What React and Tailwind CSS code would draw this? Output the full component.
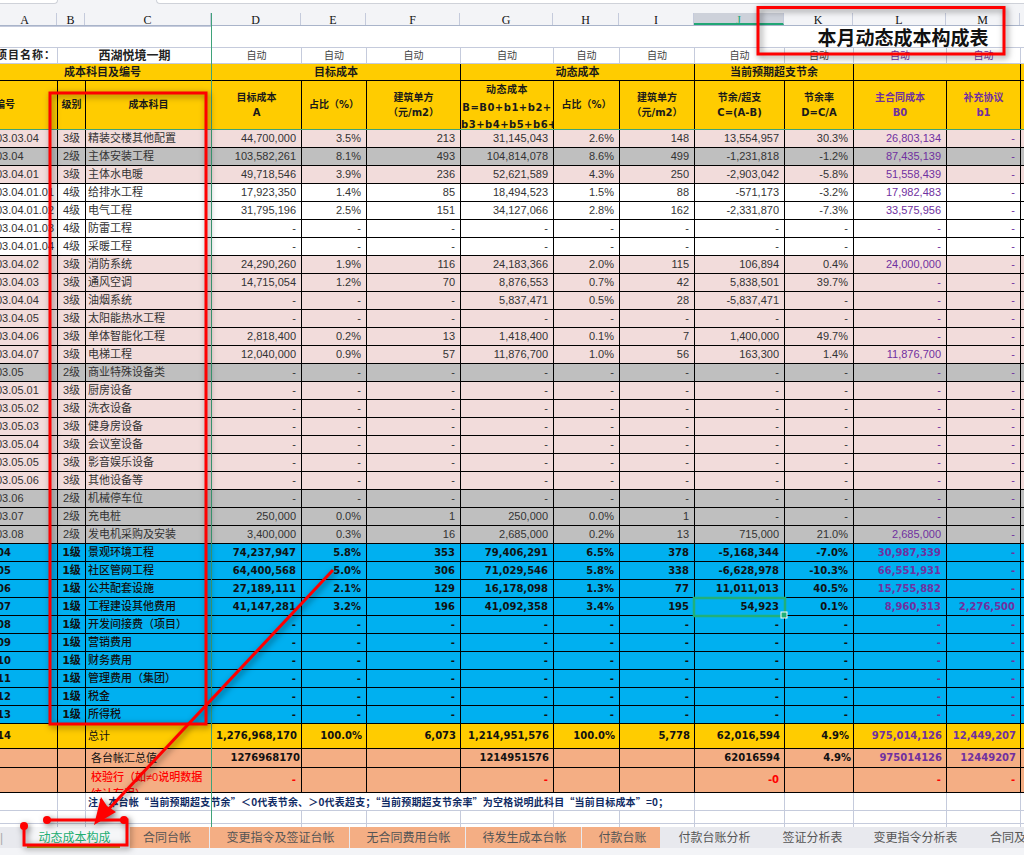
const PINK = 'bg-[#f2dcdb]';
const GRAY = 'bg-[#bfbfbf]';
const WHITE = 'bg-white';
const BLUE = 'bg-[#00b0f0]';

const D = ['-', '-', '-', '-', '-', '-', '-', '-', '-', '-'];

// code, level, name, colour, values D..M
const rows = [
  ['03.03.04', 3, '精装交楼其他配置', PINK, ['44,700,000', '3.5%', '213', '31,145,043', '2.6%', '148', '13,554,957', '30.3%', '26,803,134', '-']],
  ['03.04', 2, '主体安装工程', GRAY, ['103,582,261', '8.1%', '493', '104,814,078', '8.6%', '499', '-1,231,818', '-1.2%', '87,435,139', '-']],
  ['03.04.01', 3, '主体水电暖', PINK, ['49,718,546', '3.9%', '236', '52,621,589', '4.3%', '250', '-2,903,042', '-5.8%', '51,558,439', '-']],
  ['03.04.01.01', 4, '给排水工程', WHITE, ['17,923,350', '1.4%', '85', '18,494,523', '1.5%', '88', '-571,173', '-3.2%', '17,982,483', '-']],
  ['03.04.01.02', 4, '电气工程', WHITE, ['31,795,196', '2.5%', '151', '34,127,066', '2.8%', '162', '-2,331,870', '-7.3%', '33,575,956', '-']],
  ['03.04.01.03', 4, '防雷工程', WHITE, D],
  ['03.04.01.04', 4, '采暖工程', WHITE, D],
  ['03.04.02', 3, '消防系统', PINK, ['24,290,260', '1.9%', '116', '24,183,366', '2.0%', '115', '106,894', '0.4%', '24,000,000', '-']],
  ['03.04.03', 3, '通风空调', PINK, ['14,715,054', '1.2%', '70', '8,876,553', '0.7%', '42', '5,838,501', '39.7%', '-', '-']],
  ['03.04.04', 3, '油烟系统', PINK, ['-', '-', '-', '5,837,471', '0.5%', '28', '-5,837,471', '-', '-', '-']],
  ['03.04.05', 3, '太阳能热水工程', PINK, D],
  ['03.04.06', 3, '单体智能化工程', PINK, ['2,818,400', '0.2%', '13', '1,418,400', '0.1%', '7', '1,400,000', '49.7%', '-', '-']],
  ['03.04.07', 3, '电梯工程', PINK, ['12,040,000', '0.9%', '57', '11,876,700', '1.0%', '56', '163,300', '1.4%', '11,876,700', '-']],
  ['03.05', 2, '商业特殊设备类', GRAY, D],
  ['03.05.01', 3, '厨房设备', PINK, D],
  ['03.05.02', 3, '洗衣设备', PINK, D],
  ['03.05.03', 3, '健身房设备', PINK, D],
  ['03.05.04', 3, '会议室设备', PINK, D],
  ['03.05.05', 3, '影音娱乐设备', PINK, D],
  ['03.05.06', 3, '其他设备等', PINK, D],
  ['03.06', 2, '机械停车位', GRAY, D],
  ['03.07', 2, '充电桩', GRAY, ['250,000', '0.0%', '1', '250,000', '0.0%', '1', '-', '-', '-', '-']],
  ['03.08', 2, '发电机采购及安装', GRAY, ['3,400,000', '0.3%', '16', '2,685,000', '0.2%', '13', '715,000', '21.0%', '2,685,000', '-']],
  ['04', 1, '景观环境工程', BLUE, ['74,237,947', '5.8%', '353', '79,406,291', '6.5%', '378', '-5,168,344', '-7.0%', '30,987,339', '-']],
  ['05', 1, '社区管网工程', BLUE, ['64,400,568', '5.0%', '306', '71,029,546', '5.8%', '338', '-6,628,978', '-10.3%', '66,551,931', '-']],
  ['06', 1, '公共配套设施', BLUE, ['27,189,111', '2.1%', '129', '16,178,098', '1.3%', '77', '11,011,013', '40.5%', '15,755,882', '-']],
  ['07', 1, '工程建设其他费用', BLUE, ['41,147,281', '3.2%', '196', '41,092,358', '3.4%', '195', '54,923', '0.1%', '8,960,313', '2,276,500']],
  ['08', 1, '开发间接费（项目）', BLUE, D],
  ['09', 1, '营销费用', BLUE, D],
  ['10', 1, '财务费用', BLUE, D],
  ['11', 1, '管理费用（集团）', BLUE, D],
  ['12', 1, '税金', BLUE, D],
  ['13', 1, '所得税', BLUE, D],
];

const widths = [64, 28, 126, 90, 65, 94, 93, 66, 75, 90, 69, 93, 74, 20];
const letters = ['A', 'B', 'C', 'D', 'E', 'F', 'G', 'H', 'I', 'J', 'K', 'L', 'M', ''];

const regular = "font-['Liberation_Sans','Noto_Sans_CJK_SC',sans-serif]";
const bold = "font-['DejaVu_Sans','Noto_Sans_CJK_SC',sans-serif] font-bold";
const cell = 'border border-black p-0 overflow-hidden whitespace-nowrap';
const light = 'border border-[#c5cbdc] p-0 overflow-hidden whitespace-nowrap';

function ProjectRow() {
  const autos = ['D', 'E', 'F', 'G', 'H', 'I', 'J', 'K', 'L', 'M'];
  return (
    <tr className="h-[16px]">
      <td className={`${light} pl-[2px] text-[11px] font-bold tracking-[1px] text-[#222]`}>项目名称：</td>
      <td colSpan={2} className={`${light} text-center text-[12px] font-bold text-[#222]`}>西湖悦境一期</td>
      {autos.map((c) => (
        <td key={c} className={`${light} text-center text-[10px] ${c === 'L' || c === 'M' ? 'text-[#7030a0]' : 'text-[#444]'}`}>自动</td>
      ))}
      <td className={light}></td>
    </tr>
  );
}

function HeaderRows() {
  const h = `${cell} bg-[#ffcc00] text-center text-[11px] ${bold} text-[#1a1a1a]`;
  const h2 = `${cell} bg-[#ffcc00] text-center text-[10px] ${bold} text-[#1a1a1a]`;
  const purple = `${cell} bg-[#ffcc00] text-center text-[10px] ${bold} text-[#7030a0]`;
  return (
    <>
      <tr className="h-[17px]">
        <td colSpan={3} className={h}>成本科目及编号</td>
        <td colSpan={3} className={h}>目标成本</td>
        <td colSpan={3} className={h}>动态成本</td>
        <td colSpan={2} className={h}>当前预期超支节余</td>
        <td colSpan={2} className={h}></td>
        <td className={h}></td>
      </tr>
      <tr className="h-[49px]">
        <td className={`${h2} pl-[1px] !text-left`}>编号</td>
        <td className={h2}>级别</td>
        <td className={h2}>成本科目</td>
        <td className={`${h2} leading-[15px]`}>目标成本<br />A</td>
        <td className={h2}>占比（%）</td>
        <td className={`${h2} leading-[15px]`}>建筑单方<br />（元/m2）</td>
        <td className={`${h2} leading-[17.5px] tracking-[0.5px]`}>
          <div className="h-[48px] overflow-hidden">动态成本<br />B=B0+b1+b2+<br />b3+b4+b5+b6+</div>
        </td>
        <td className={h2}>占比（%）</td>
        <td className={`${h2} leading-[15px]`}>建筑单方<br />（元/m2）</td>
        <td className={`${h2} leading-[15px]`}>节余/超支<br />C=(A-B)</td>
        <td className={`${h2} leading-[15px]`}>节余率<br />D=C/A</td>
        <td className={`${purple} leading-[15px]`}>主合同成本<br />B0</td>
        <td className={`${purple} leading-[15px]`}>补充协议<br />b1</td>
        <td className={h2}></td>
      </tr>
    </>
  );
}

function DataRow({ row }) {
  const [code, level, name, color, values] = row;
  const isBold = level === 1;
  const font = isBold ? bold : regular;
  const size = isBold ? 'text-[10px]' : 'text-[11px]';
  const ink = isBold ? 'text-[#111]' : 'text-[#333]';
  return (
    <tr className={`h-[18px] ${color}`}>
      <td className={`${cell} ${font} ${size} ${ink} ${isBold ? 'pl-[3px]' : 'pl-[2px]'}`}>{code}</td>
      <td className={`${cell} text-center ${font} text-[11px] ${ink}`}>{level}级</td>
      <td className={`${cell} pl-[2px] ${regular} ${isBold ? 'font-medium text-[#111]' : ink} text-[11px]`}>{name}</td>
      {values.map((v, i) => (
        <td key={i} className={`${cell} pr-[5px] text-right ${font} ${size} ${i >= 8 ? 'text-[#7030a0]' : ink}`}>{v}</td>
      ))}
      <td className={cell}></td>
    </tr>
  );
}

function TotalRows() {
  const num = `${cell} pr-[4px] text-right text-[10px] ${bold} text-[#111]`;
  const numP = `${cell} pr-[4px] text-right text-[10px] ${bold} text-[#7030a0]`;
  const red = `${cell} pr-[5px] text-right text-[10px] ${bold} text-[#ff0000]`;
  return (
    <>
      <tr className="h-[25px] bg-[#ffcc00]">
        <td className={`${cell} pl-[3px] text-[10px] ${bold} text-[#111]`}>14</td>
        <td className={cell}></td>
        <td className={`${cell} pl-[2px] text-[11px] ${regular} text-[#111]`}>总计</td>
        <td className={num}>1,276,968,170</td>
        <td className={num}>100.0%</td>
        <td className={num}>6,073</td>
        <td className={num}>1,214,951,576</td>
        <td className={num}>100.0%</td>
        <td className={num}>5,778</td>
        <td className={num}>62,016,594</td>
        <td className={num}>4.9%</td>
        <td className={numP}>975,014,126</td>
        <td className={numP}>12,449,207</td>
        <td className={cell}></td>
      </tr>
      <tr className="h-[19px] bg-[#f4ae84]">
        <td className={cell}></td>
        <td className={cell}></td>
        <td className={`${cell} pl-[5px] text-[11px] ${regular} text-[#111]`}>各台帐汇总值</td>
        <td className={`${num} !pr-[1px]`}>1276968170</td>
        <td className={cell}></td>
        <td className={cell}></td>
        <td className={num}>1214951576</td>
        <td className={cell}></td>
        <td className={cell}></td>
        <td className={num}>62016594</td>
        <td className={`${num} !pr-[2px]`}>4.9%</td>
        <td className={numP}>975014126</td>
        <td className={numP}>12449207</td>
        <td className={cell}></td>
      </tr>
      <tr className="h-[25px] bg-[#f4ae84]">
        <td className={cell}></td>
        <td className={cell}></td>
        <td className={`${cell} text-[11px] ${regular} font-medium text-[#ff0000]`}>
          <div className="h-[24px] overflow-hidden whitespace-normal pl-[5px] pt-[1px] leading-[17px]">校验行（如≠0说明数据统计有误）</div>
        </td>
        <td className={red}>-</td>
        <td className={cell}></td>
        <td className={cell}></td>
        <td className={red}>-</td>
        <td className={cell}></td>
        <td className={cell}></td>
        <td className={red}>-0</td>
        <td className={cell}></td>
        <td className={red}>-</td>
        <td className={red}>-</td>
        <td className={cell}></td>
      </tr>
    </>
  );
}

function NoteRows() {
  return (
    <>
      <tr className="h-[18px] bg-white">
        <td className={`${light} border-t-black`}></td>
        <td className={`${light} border-t-black`}></td>
        <td colSpan={7} className={`${light} border-t-black pl-[2px] font-['Noto_Sans_CJK_SC',sans-serif] text-[10px] font-bold tracking-[0.2px] text-[#0f2a63]`}>
          注：本台帐“当前预期超支节余”＜0代表节余、＞0代表超支；“当前预期超支节余率”为空格说明此科目“当前目标成本”=0；
        </td>
        {[0, 1, 2, 3, 4].map((i) => (
          <td key={i} className={`${light} border-t-black`}></td>
        ))}
      </tr>
      <tr className="h-[13px] bg-white">
        {widths.map((_, i) => (
          <td key={i} className={light}></td>
        ))}
      </tr>
      <tr className="h-[6px] bg-white">
        {widths.map((_, i) => (
          <td key={i} className={light}></td>
        ))}
      </tr>
    </>
  );
}

function SheetTabs() {
  const salmon = [
    ['合同台帐', 'w-[79px] pr-[5px]'],
    ['变更指令及签证台帐', 'w-[139px] pl-[2px]'],
    ['无合同费用台帐', 'w-[115px] pl-[2px]'],
    ['待发生成本台帐', 'w-[115px] pl-[2px]'],
    ['付款台账', 'w-[78px] pl-[3px]'],
  ];
  const plain = [
    ['付款台账分析', 'w-[107px] pl-[2px]'],
    ['签证分析表', 'w-[91px]'],
    ['变更指令分析表', 'w-[115px]'],
    ['合同及变更分析表', 'w-[100px] justify-start pl-[17px]'],
  ];
  return (
    <div className={`flex h-[28px] flex-col bg-[#f3f4f7] ${regular} text-[12px] text-[#555]`}>
      <div className="flex h-[21px] bg-[#e8e9ee]">
        <div className="flex w-[22px] shrink-0 items-center text-[#aaa]">|</div>
        <div className="relative flex w-[107px] shrink-0 items-center justify-center bg-[#f5f6f8] pr-[2px] text-[#22ae72]">
          动态成本构成
          <span className="absolute bottom-0 left-[5px] h-[2px] w-[93px] bg-[#c49a1a]"></span>
        </div>
        <div className="flex gap-[1px] pl-[1px]">
          {salmon.map(([label, w]) => (
            <div key={label} className={`flex shrink-0 items-center justify-center bg-[#f4ae84] ${w}`}>{label}</div>
          ))}
        </div>
        {plain.map(([label, w]) => (
          <div key={label} className={`flex shrink-0 items-center justify-center whitespace-nowrap ${w}`}>{label}</div>
        ))}
      </div>
    </div>
  );
}

// hand-drawn annotations and selection marks that sit on top of the sheet
function Annotations() {
  return (
    <svg className="pointer-events-none absolute left-0 top-0" width="1024" height="855">
      <line x1="211.5" y1="13" x2="211.5" y2="827" stroke="#3fa27a" strokeWidth="1" />
      <line x1="0" y1="129.5" x2="1024" y2="129.5" stroke="#3fa27a" strokeWidth="1" />
      <rect x="694" y="598" width="91" height="18" fill="none" stroke="#21b07a" strokeWidth="2.5" />
      <rect x="781" y="612" width="6" height="6" fill="#21b07a" stroke="#fff" strokeWidth="1" />
      <g style={{ filter: 'drop-shadow(2px 2px 3px rgba(0,0,0,0.5))' }}>
        <rect x="50" y="93" width="156" height="631" fill="none" stroke="#ff0000" strokeWidth="3" />
        <rect x="758" y="7.5" width="246" height="46.5" fill="none" stroke="#ff0000" strokeWidth="3" />
        <polyline points="24,826 24,845 127,845 127,820 47,820" fill="none" stroke="#ff0000" strokeWidth="3" />
        <circle cx="24" cy="826" r="4" fill="#ff0000" />
        <circle cx="47" cy="820" r="4" fill="#ff0000" />
        <circle cx="124" cy="820" r="4" fill="#ff0000" />
        <line x1="333" y1="570" x2="106" y2="812" stroke="#ff0000" strokeWidth="3" />
        <polygon points="94,825 101,797 107,806 116,812" fill="#ff0000" />
      </g>
    </svg>
  );
}

export default function App() {
  return (
    <div className={`relative h-[855px] w-[1024px] overflow-hidden bg-white ${regular}`}>
      {/* 顶部工作簿标签 */}
      <div className="relative h-[13px] bg-[#f3f4f7]">
        <div className="absolute left-0 top-0 h-[4px] w-[58px] rounded-br border-b border-r border-[#cfd2d9] bg-white"></div>
        <div className="absolute right-0 top-0 h-[4px] w-[868px] rounded-bl border-b border-l border-[#cfd2d9] bg-white"></div>
      </div>

      {/* 列标 */}
      <div className="-ml-[7px] flex h-[13px] border-b border-[#a9b4ca] bg-[#f3f4f7] font-['Liberation_Serif',serif] text-[12px] leading-[11px] text-[#111]">
        {letters.map((l, i) => (
          <div
            key={i}
            style={{ width: widths[i] }}
            className={`shrink-0 border-r border-[#c5cbdc] pt-[2px] text-center ${l === 'J' ? 'border-b-2 border-b-[#21a675] bg-[#cdd1da] text-[#21a675]' : ''}`}
          >
            {l}
          </div>
        ))}
      </div>

      <table className="-ml-[7px] w-[1037px] table-fixed border-collapse leading-none">
        <colgroup>
          {widths.map((w, i) => (
            <col key={i} style={{ width: w }} />
          ))}
        </colgroup>
        <tbody>
          <tr className="h-[21px]">
            <td colSpan={3} className={light}></td>
            {[0, 1, 2, 3, 4, 5].map((i) => (
              <td key={i} className="p-0"></td>
            ))}
            <td colSpan={4} className="p-0 pr-[32px] text-right font-['Noto_Sans_CJK_SC',sans-serif] text-[19px] font-bold whitespace-nowrap text-[#111]">
              本月动态成本构成表
            </td>
            <td className="p-0"></td>
          </tr>
          <ProjectRow />
          <HeaderRows />
          {rows.map((row) => (
            <DataRow key={row[0]} row={row} />
          ))}
          <TotalRows />
          <NoteRows />
        </tbody>
      </table>

      <div className="absolute bottom-0 left-0 w-full">
        <SheetTabs />
      </div>
      <Annotations />
    </div>
  );
}
